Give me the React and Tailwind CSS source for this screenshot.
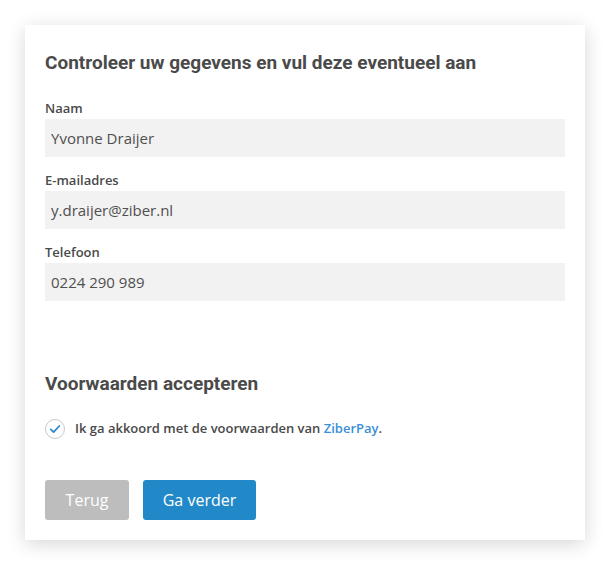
import { useState } from 'react'

const fields = [
  { label: 'Naam', value: 'Yvonne Draijer' },
  { label: 'E-mailadres', value: 'y.draijer@ziber.nl' },
  { label: 'Telefoon', value: '0224 290 989' },
]

export default function App() {
  const [agreed, setAgreed] = useState(true)

  return (
    <div className="min-h-[565px] bg-white pt-[25px] px-[25px]" style={{ fontFamily: "'Open Sans', sans-serif" }}>
      <div className="w-[560px] bg-white px-5 pt-[26px] pb-5 shadow-[0_4px_18px_rgba(0,0,0,0.16)]">
        <h2
          className="text-[19px] leading-6 font-bold text-[#4a4a4a]"
          style={{ fontFamily: 'Roboto, sans-serif' }}
        >
          Controleer uw gegevens en vul deze eventueel aan
        </h2>

        <div className="mt-6 flex flex-col gap-[14px]">
          {fields.map(f => (
            <div key={f.label}>
              <label className="block text-[13px] leading-[18px] font-semibold text-[#4a4a4a]">{f.label}</label>
              <input
                defaultValue={f.value}
                className="mt-[2px] block w-full h-[38px] bg-[#f2f2f2] px-[6px] text-[15px] text-[#4f4f4f] outline-none"
              />
            </div>
          ))}
        </div>

        <h2
          className="mt-[71px] text-[19px] leading-6 font-bold text-[#4a4a4a]"
          style={{ fontFamily: 'Roboto, sans-serif' }}
        >
          Voorwaarden accepteren
        </h2>

        <label className="mt-[23px] flex items-center gap-[10px] cursor-pointer">
          <button
            type="button"
            onClick={() => setAgreed(a => !a)}
            className="w-5 h-5 rounded-full border border-[#c8c8c8] bg-white flex items-center justify-center"
          >
            {agreed && (
              <svg width="12" height="12" viewBox="0 0 12 12" fill="none">
                <path d="M1.8 6.4l2.8 2.7L10.3 3" stroke="#2a8ad0" strokeWidth="1.8" strokeLinecap="round" strokeLinejoin="round" />
              </svg>
            )}
          </button>
          <span className="text-[13px] font-semibold text-[#4a4a4a]">
            Ik ga akkoord met de voorwaarden van <span className="text-[#3a8fd6]">ZiberPay</span>.
          </span>
        </label>

        <div className="mt-[41px] flex gap-[14px]">
          <button className="w-[84px] h-10 rounded-[3px] bg-[#bdbdbd] text-white text-[16px]">Terug</button>
          <button className="w-[113px] h-10 rounded-[3px] bg-[#2289c9] text-white text-[16px]">Ga verder</button>
        </div>
      </div>
    </div>
  )
}
